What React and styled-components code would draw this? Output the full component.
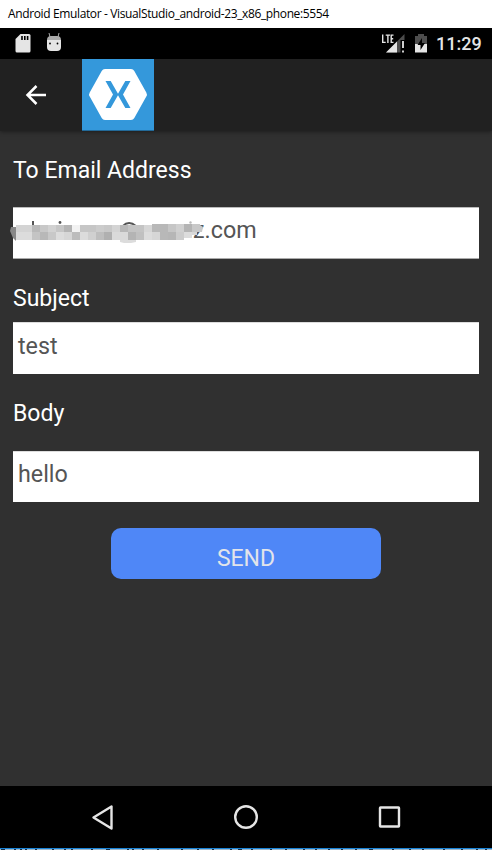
import React from "react";
import styled, { createGlobalStyle } from "styled-components";

const Global = createGlobalStyle`
  *{box-sizing:border-box}
  body{margin:0;background:#303030}
`;
const Screen = styled.main`
  width:492px;height:850px;display:flex;flex-direction:column;overflow:hidden;
  background:#303030;font-family:Roboto,sans-serif;
`;
const TitleBar = styled.header`
  height:28px;flex:none;background:#fff;color:#000;padding-left:8px;
  font:12px/27px "Open Sans",sans-serif;letter-spacing:-.37px;white-space:nowrap;
`;
const StatusBar = styled.div`
  height:31px;flex:none;background:#000;display:flex;align-items:center;justify-content:space-between;
`;
const Graphic = styled.svg`display:block;flex:none;`;
const StatusRight = styled.div`display:flex;align-items:center;padding-right:10px;`;
const Clock = styled.span`color:#e5e5e5;font-size:18px;font-weight:500;line-height:32px;width:46px;white-space:nowrap;`;
const AppBar = styled.nav`
  height:72px;flex:none;background:#212121;display:flex;align-items:center;
  box-shadow:0 1px 4px rgba(0,0,0,.4);
`;
const BackButton = styled.button`
  width:82px;height:72px;border:0;padding:0 0 0 24px;background:none;flex:none;
`;
const Form = styled.form`flex:1;display:flex;flex-direction:column;padding:0 13px;`;
const Label = styled.label`color:#fff;font-size:23px;line-height:28px;margin-top:${p => p.$top}px;`;
const Field = styled.div`
  height:${p => p.$height}px;margin-top:${p => p.$top}px;background:#fff;color:#555;
  font-size:23.3px;line-height:${p => p.$line}px;padding-left:5px;
  border-top:1px solid ${p => (p.$edge ? "#bbb" : "#ddd")};
  border-bottom:1px solid ${p => (p.$edge ? "#aaa" : "#fff")};
`;
const EmailField = styled(Field)`position:relative;padding-left:180px;`;
const Redaction = styled.svg`position:absolute;left:-5px;top:6px;`;
const Send = styled.button`
  width:270px;height:51px;margin:26px auto 0;border:0;border-radius:10px;padding:10px 0 0;
  background:#4f87f7;color:#e2e4ea;font-family:Roboto,sans-serif;font-size:23px;line-height:41px;
`;
const NavBar = styled.footer`height:62px;flex:none;background:#000;`;
const WindowEdge = styled.svg`display:block;flex:none;`;

const upper = "d4 d4 b9 c8 d2 c6 b4 f2 c6 c6 cc c8 d4 b8 c4 c4 d6 b8 b8 c6 d0 b4 c8".split(" ");
const lower = "dc dc c4 b8 c8 dc d6 bc dc d0 be b0 da da b4 c0 dc d6 b8 b6 cc dc d8".split(" ");
const specks = [1, 14, 20, 25, 35, 52, 64, 71, 91, 106, 127, 132, 142, 157, 181, 197, 212, 230, 238, 251, 270, 285, 303, 315, 328, 341, 355, 369, 392, 409, 422, 443, 461, 476, 485];

export default function App() {
  return (
    <Screen>
      <Global />
      <TitleBar>Android Emulator - VisualStudio_android-23_x86_phone:5554</TitleBar>
      <StatusBar>
        <Graphic width="70" height="31">
          <path fill="#e5e5e5" d="M20.500 6H29q1.500 0 1.500 1.500v15.500q0 1.500-1.500 1.500H17q-1.500 0-1.500-1.500V11z" />
          <path stroke="#000" strokeWidth="1.600" d="M22 8v4M24.800 8v4M27.600 8v4" />
          <path fill="#aaa" d="M47 12q0-4 4-4h6q4 0 4 4z" />
          <path stroke="#aaa" strokeWidth="1" d="M50 9l-1-4M58 9l1-4" />
          <path fill="#e5e5e5" d="M47 12h14v7q0 4-4 4h-6q-4 0-4-4z" />
          <circle cx="50" cy="15.500" r=".9" /><circle cx="57.500" cy="15.500" r=".9" />
        </Graphic>
        <StatusRight>
          <Graphic width="56" height="31" viewBox="380 0 56 31">
            <path d="M382.700 6.500v7.900h3M385.700 7.100h4.300M387.900 7.100v8M393.500 7.100h-2.300v7.300h2.300M391.200 10.700h2" fill="none" stroke="#e5e5e5" strokeWidth="1.400" />
            <path fill="#4d4d4d" d="M404.500 6v6h-4v12.500H386z" />
            <path fill="#e5e5e5" d="M397 13.500V24.500H386z" />
            <path stroke="#e5e5e5" strokeWidth="1.800" d="M403 13v7M403 22.500v2" />
            <path fill="#4d4d4d" d="M418 6h6v2h3v9h-12V8h3z" />
            <path fill="#e5e5e5" d="M415 16h12v8.500h-12z" />
            <path fill="#000" d="M422 10l-4.500 7h3v5l4.500-7h-3z" />
          </Graphic>
          <Clock>11:29</Clock>
        </StatusRight>
      </StatusBar>
      <AppBar>
        <BackButton type="button" aria-label="Back">
          <Graphic width="24" height="24" fill="none" stroke="#fff" strokeWidth="2.500">
            <path d="M22 12H4M12.500 3L3.500 12l9 9" />
          </Graphic>
        </BackButton>
        <Graphic width="72" height="72">
          <path fill="#3498db" d="M0 0h72v71H0z" /><path fill="#236a99" d="M0 71h72v1H0z" />
          <path fill="#fff" d="M23 10h26q2.200 0 3.300 2l12 21.500q1.200 2 0 4L52.300 59q-1.100 2-3.300 2H23q-2.200 0-3.300-2L7.700 37.500q-1.200-2 0-4L19.700 12q1.100-2 3.300-2z" />
          <path fill="#3498db" d="M23.500 22h5.200L36 34.800 43.300 22h5.200L41 35.500 48.500 49h-5.200L36 36.200 28.700 49h-5.200L31 35.500z" />
        </Graphic>
      </AppBar>
      <Form>
        <Label $top={26}>To Email Address</Label>
        <EmailField $height={52} $line={44} $top={22} $edge>
          <Redaction width="206" height="40" viewBox="8 214 206 40">
            <path stroke="#555" strokeWidth="2" d="M33 221v5" />
            <circle cx="60" cy="222.500" r="1.400" fill="#555" />
            <path d="M122.500 226q6.500-6 13.500 0" fill="none" stroke="#555" strokeWidth="1.700" />
            <circle cx="190.500" cy="222.500" r="1.200" fill="#bbb" />
            <path fill="#888" d="M11 227h5v14l-3-3-3-7z" />
            <g shapeRendering="crispEdges">
              {upper.map((c, i) => {
                const y = i > 16 ? 224 : 225;
                return <rect key={i} x={16 + i * 8} y={y} width="8" height={232 - y} fill={`#${c}${c}${c}`} />;
              })}
              {lower.map((c, i) => (
                <rect key={i} x={16 + i * 8} y="232" width={i === 22 ? 5 : 8} height={i === 22 ? 3 : i === 21 ? 6 : 8} fill={`#${c}${c}${c}`} />
              ))}
            </g>
            <path fill="#dcdcdc" d="M120 240h16v2l-5 1h-7l-4-1z" />
            <path fill="#c8c8c8" d="M200 225l3 2-1 5h-2z" />
          </Redaction>
          z.com
        </EmailField>
        <Label $top={26}>Subject</Label>
        <Field $height={52} $line={46} $top={9}>test</Field>
        <Label $top={26}>Body</Label>
        <Field $height={51} $line={44} $top={23}>hello</Field>
        <Send type="button">SEND</Send>
      </Form>
      <NavBar>
        <Graphic width="492" height="62" fill="none" stroke="#e5e5e5" strokeWidth="2.400">
          <path strokeLinejoin="round" d="M111.500 20.500v22L93.500 31.500z" />
          <circle cx="246" cy="31" r="10.800" />
          <rect x="380" y="21.500" width="19" height="19" rx=".5" />
        </Graphic>
      </NavBar>
      <WindowEdge width="492" height="2" shapeRendering="crispEdges">
        <path fill="#1883d7" d="M0 0h492v1H0z" />
        <path fill="#9db8cc" d="M0 1h492v1H0z" />
        {specks.map((x, i) => <rect key={x} x={x} y="1" width={i % 9 === 0 ? 4 : 2} height="1" fill="#12304d" />)}
      </WindowEdge>
    </Screen>
  );
}
